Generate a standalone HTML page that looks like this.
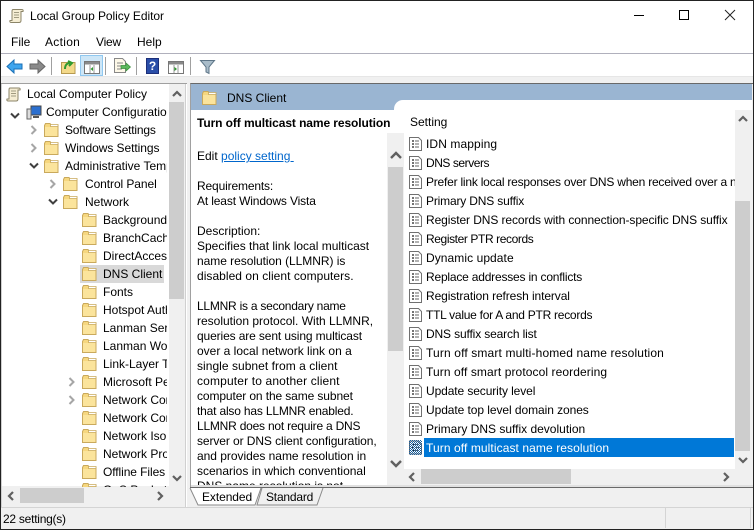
<!DOCTYPE html>
<html><head><meta charset="utf-8"><style>
html,body{margin:0;padding:0;width:754px;height:530px;overflow:hidden;background:#f0f0f0}
*{box-sizing:border-box}
#w{position:absolute;left:0;top:0;width:754px;height:530px;background:#fff;overflow:hidden;font:12px "Liberation Sans",sans-serif;color:#000}
.a{position:absolute}
.t{position:absolute;white-space:nowrap;line-height:16px;height:16px}
.clip{position:absolute;overflow:hidden}
svg{position:absolute;overflow:visible}
</style></head><body><div id="w">
<svg width="0" height="0" style="position:absolute"><defs>
<symbol id="f" viewBox="0 0 15 14"><path d="M.5 2.500v11h13.500v-11.500h-7l-1-1.500h-4.500z" fill="#f6d77f" stroke="#c9a95c"/><path d="M1 4h12.500v9h-12.500z" fill="#fbe49c"/><path d="M6.500 1.500h7.500v2h-7.500z" fill="#fff" stroke="#c9a95c" stroke-width=".8"/></symbol>
<symbol id="d" viewBox="0 0 13 14"><path d="M.5.500h9l3 3v10h-12z" fill="#fff" stroke="#707070"/><path d="M3 4h2M3 7h2M3 10h2" stroke="#222" stroke-width="1.300"/><path d="M6 4h4M6 7h4M6 10h4" stroke="#666" stroke-width="1"/></symbol>
<symbol id="s" viewBox="0 0 15 15"><path d="M4 1h9c1 0 1.500 1 1 2h-2v9c0 1.500-1 2-2 2H2c-1 0-1.500-1-1-2h2V3c0-1 0-2 1-2z" fill="#f5edd3" stroke="#8b8468"/><path d="M5 4h5M5 6.500h5M5 9h5" stroke="#a09a80"/></symbol>
<symbol id="cr" viewBox="0 0 8 10"><path d="M1.500 1l4 4-4 4" fill="none" stroke="#a6a6a6" stroke-width="2"/></symbol>
<symbol id="cd" viewBox="0 0 10 8"><path d="M1 1.500l4 4 4-4" fill="none" stroke="#404040" stroke-width="2"/></symbol>
<symbol id="al" viewBox="0 0 8 10"><path d="M6 1L2 5l4 4" fill="none" stroke="#606060" stroke-width="2.200"/></symbol>
<symbol id="ar" viewBox="0 0 8 10"><path d="M2 1l4 4-4 4" fill="none" stroke="#606060" stroke-width="2.200"/></symbol>
</defs></svg>

<!-- window frame -->
<div class="a" style="left:0;top:0;width:754px;height:1px;background:#222"></div>
<div class="a" style="left:0;top:0;width:1px;height:530px;background:#222"></div>
<div class="a" style="left:753px;top:0;width:1px;height:530px;background:#222"></div>
<div class="a" style="left:0;top:529px;width:754px;height:1px;background:#222"></div>

<!-- title bar -->
<svg style="left:9px;top:8px" width="15" height="16"><use href="#s" width="15" height="16"/></svg>
<div class="t" style="left:30px;top:8px;letter-spacing:-.06px">Local Group Policy Editor</div>
<div class="a" style="left:634px;top:15px;width:10px;height:1px;background:#000"></div>
<div class="a" style="left:679px;top:10px;width:10px;height:10px;border:1px solid #000"></div>
<svg style="left:725px;top:10px" width="10" height="10"><path d="M0 0l10 10M10 0L0 10" stroke="#222" stroke-width="1"/></svg>

<!-- menu -->
<div class="t" style="left:11px;top:34px">File</div>
<div class="t" style="left:45px;top:34px;letter-spacing:.3px">Action</div>
<div class="t" style="left:96px;top:34px;letter-spacing:-.2px">View</div>
<div class="t" style="left:137px;top:34px">Help</div>
<div class="a" style="left:1px;top:53px;width:752px;height:1px;background:#b0b0bc"></div>

<!-- toolbar -->
<svg style="left:6px;top:59px" width="17" height="15"><path d="M8 1L1 7.500 8 14v-4h8V5H8z" fill="#3ea5ee" stroke="#1a6fb5"/></svg>
<svg style="left:29px;top:59px" width="17" height="15"><path d="M9 1l7 6.500L9 14v-4H1V5h8z" fill="#8a8a8a" stroke="#666"/></svg>
<div class="a" style="left:51px;top:57px;width:1px;height:18px;background:#a0a0a0"></div>
<svg style="left:61px;top:59px" width="15" height="15"><path d="M.5 3.500h13.500v11H.5z" fill="#f3d98a" stroke="#b79a50"/><path d="M4 10c0-4 2-6 5-6M7 2l4 2-3 3" fill="none" stroke="#2f9a2f" stroke-width="2"/></svg>
<div class="a" style="left:80px;top:55px;width:23px;height:21px;background:#cde6f7;border:1px solid #90c8f0"></div>
<svg style="left:84px;top:61px" width="16" height="13"><path d="M.5.500h15v12H.5z" fill="#fff" stroke="#777"/><path d="M1 1h14v2.500H1z" fill="#8a8a8a"/><path d="M6 4v8M10 4v8" stroke="#999"/><path d="M9 6v4L6.500 8z" fill="#2f9a2f"/></svg>
<div class="a" style="left:105px;top:57px;width:1px;height:18px;background:#a0a0a0"></div>
<svg style="left:114px;top:58px" width="17" height="16"><path d="M.5.500h8l3 3v11H.5z" fill="#fdf8e8" stroke="#888"/><path d="M3 5h6M3 8h5M3 11h5" stroke="#888"/><path d="M7 7.500h5V5l4.500 4-4.500 4v-2.500H7z" fill="#5cb85c" stroke="#3a8f3a" stroke-width=".7"/></svg>
<div class="a" style="left:136px;top:57px;width:1px;height:18px;background:#a0a0a0"></div>
<div class="a" style="left:146px;top:58px;width:13px;height:16px;background:#2a4ea8;border:1px solid #1c2f7a;color:#fff;font:bold 12px/14px 'Liberation Sans',sans-serif;text-align:center">?</div>
<svg style="left:168px;top:61px" width="16" height="13"><path d="M.5.500h15v12H.5z" fill="#fff" stroke="#777"/><path d="M1 1h14v2.500H1z" fill="#8a8a8a"/><path d="M6 4v8M10 4v8" stroke="#999"/><path d="M6.500 6v4L9 8z" fill="#2f9a2f"/></svg>
<div class="a" style="left:190px;top:57px;width:1px;height:18px;background:#a0a0a0"></div>
<svg style="left:200px;top:60px" width="15" height="14"><path d="M.5.500h14L9 7v6.500L6 12V7z" fill="#a9bcc9" stroke="#5d7587"/></svg>
<div class="a" style="left:1px;top:76px;width:752px;height:1px;background:#e6e6e6"></div>
<div class="a" style="left:1px;top:77px;width:752px;height:6px;background:#f0f0f0"></div>

<!-- tree panel -->
<div class="a" style="left:1px;top:83px;width:185px;height:425px;background:#f0f0f0;border:1px solid #d0d0d0;border-width:0 1px 1px 1px"></div>
<div class="a" style="left:1px;top:83px;width:186px;height:1px;background:#a0a0a0"></div>
<div class="a" style="left:2px;top:84px;width:167px;height:402px;background:#fff"></div>
<div class="clip" style="left:2px;top:84px;width:165px;height:403px">
<svg style="left:4px;top:3px" width="15" height="15"><use href="#s" width="15" height="15"/></svg>
<div class="t" style="left:25px;top:2px">Local Computer Policy</div>
<svg style="left:8px;top:28px" width="10" height="8"><use href="#cd" width="10" height="8"/></svg>
<svg style="left:24px;top:21px" width="16" height="15"><path d="M5 1h10v9H5z" fill="#2b6fcf" stroke="#444"/><path d="M1 4h4v10H1z" fill="#ddd" stroke="#666"/><path d="M7 12h6" stroke="#555" stroke-width="2"/></svg>
<div class="t" style="left:44px;top:20px">Computer Configuration</div>
<!-- rows -->
<svg style="left:28px;top:41px" width="8" height="10"><use href="#cr" width="8" height="10"/></svg>
<svg style="left:42px;top:39px" width="15" height="14"><use href="#f" width="15" height="14"/></svg>
<div class="t" style="left:63px;top:38px;letter-spacing:-.2px">Software Settings</div>
<svg style="left:28px;top:59px" width="8" height="10"><use href="#cr" width="8" height="10"/></svg>
<svg style="left:42px;top:57px" width="15" height="14"><use href="#f" width="15" height="14"/></svg>
<div class="t" style="left:63px;top:56px;letter-spacing:-.06px">Windows Settings</div>
<svg style="left:27px;top:78px" width="10" height="8"><use href="#cd" width="10" height="8"/></svg>
<svg style="left:42px;top:75px" width="15" height="14"><use href="#f" width="15" height="14"/></svg>
<div class="t" style="left:63px;top:74px">Administrative Templates</div>
<svg style="left:47px;top:95px" width="8" height="10"><use href="#cr" width="8" height="10"/></svg>
<svg style="left:61px;top:93px" width="15" height="14"><use href="#f" width="15" height="14"/></svg>
<div class="t" style="left:83px;top:92px;letter-spacing:-.08px">Control Panel</div>
<svg style="left:46px;top:114px" width="10" height="8"><use href="#cd" width="10" height="8"/></svg>
<svg style="left:61px;top:111px" width="15" height="14"><use href="#f" width="15" height="14"/></svg>
<div class="t" style="left:83px;top:110px">Network</div>
<svg style="left:80px;top:129px" width="15" height="14"><use href="#f" width="15" height="14"/></svg>
<div class="t" style="left:101px;top:128px">Background Intelligent</div>
<svg style="left:80px;top:147px" width="15" height="14"><use href="#f" width="15" height="14"/></svg>
<div class="t" style="left:101px;top:146px">BranchCache</div>
<svg style="left:80px;top:165px" width="15" height="14"><use href="#f" width="15" height="14"/></svg>
<div class="t" style="left:101px;top:164px">DirectAccess Client</div>
<div class="a" style="left:78px;top:181px;width:84px;height:18px;background:#d9d9d9"></div>
<svg style="left:80px;top:183px" width="15" height="14"><use href="#f" width="15" height="14"/></svg>
<div class="t" style="left:101px;top:182px">DNS Client</div>
<svg style="left:80px;top:201px" width="15" height="14"><use href="#f" width="15" height="14"/></svg>
<div class="t" style="left:101px;top:200px">Fonts</div>
<svg style="left:80px;top:219px" width="15" height="14"><use href="#f" width="15" height="14"/></svg>
<div class="t" style="left:101px;top:218px">Hotspot Authentication</div>
<svg style="left:80px;top:237px" width="15" height="14"><use href="#f" width="15" height="14"/></svg>
<div class="t" style="left:101px;top:236px">Lanman Server</div>
<svg style="left:80px;top:255px" width="15" height="14"><use href="#f" width="15" height="14"/></svg>
<div class="t" style="left:101px;top:254px">Lanman Workstation</div>
<svg style="left:80px;top:273px" width="15" height="14"><use href="#f" width="15" height="14"/></svg>
<div class="t" style="left:101px;top:272px">Link-Layer Topology</div>
<svg style="left:66px;top:293px" width="8" height="10"><use href="#cr" width="8" height="10"/></svg>
<svg style="left:80px;top:291px" width="15" height="14"><use href="#f" width="15" height="14"/></svg>
<div class="t" style="left:101px;top:290px">Microsoft Peer-to-Peer</div>
<svg style="left:66px;top:311px" width="8" height="10"><use href="#cr" width="8" height="10"/></svg>
<svg style="left:80px;top:309px" width="15" height="14"><use href="#f" width="15" height="14"/></svg>
<div class="t" style="left:101px;top:308px">Network Connections</div>
<svg style="left:80px;top:327px" width="15" height="14"><use href="#f" width="15" height="14"/></svg>
<div class="t" style="left:101px;top:326px">Network Connectivity</div>
<svg style="left:80px;top:345px" width="15" height="14"><use href="#f" width="15" height="14"/></svg>
<div class="t" style="left:101px;top:344px">Network Isolation</div>
<svg style="left:80px;top:363px" width="15" height="14"><use href="#f" width="15" height="14"/></svg>
<div class="t" style="left:101px;top:362px">Network Provider</div>
<svg style="left:80px;top:381px" width="15" height="14"><use href="#f" width="15" height="14"/></svg>
<div class="t" style="left:101px;top:380px;letter-spacing:-.08px">Offline Files</div>
<svg style="left:80px;top:399px" width="15" height="14"><use href="#f" width="15" height="14"/></svg>
<div class="t" style="left:101px;top:398px">QoS Packet Scheduler</div>
</div>
<!-- tree scrollbars -->
<div class="a" style="left:169px;top:84px;width:16px;height:403px;background:#f0f0f0"></div>
<svg style="left:172px;top:90px" width="10" height="8"><path d="M1 6l4-4 4 4" fill="none" stroke="#606060" stroke-width="2.200"/></svg>
<div class="a" style="left:169px;top:102px;width:15px;height:197px;background:#cdcdcd"></div>
<svg style="left:172px;top:474px" width="10" height="8"><path d="M1 2l4 4 4-4" fill="none" stroke="#606060" stroke-width="2.200"/></svg>
<div class="a" style="left:2px;top:487px;width:183px;height:19px;background:#f0f0f0"></div>
<svg style="left:7px;top:491px" width="8" height="10"><use href="#al" width="8" height="10"/></svg>
<div class="a" style="left:20px;top:488px;width:64px;height:15px;background:#cdcdcd"></div>
<svg style="left:156px;top:491px" width="8" height="10"><use href="#ar" width="8" height="10"/></svg>

<!-- right panel -->
<div class="a" style="left:187px;top:83px;width:566px;height:425px;background:#f0f0f0"></div>
<div class="a" style="left:190px;top:83px;width:563px;height:404px;border-left:1px solid #a0a0a0;border-top:1px solid #696969"></div>
<div class="a" style="left:191px;top:84px;width:561px;height:26px;background:#9ab5d2"></div>
<svg style="left:202px;top:91px" width="15" height="14"><use href="#f" width="15" height="14"/></svg>
<div class="t" style="left:227px;top:90px">DNS Client</div>

<!-- description -->
<div class="a" style="left:191px;top:110px;width:213px;height:375px;background:#fff"></div>
<div class="clip" style="left:191px;top:110px;width:203px;height:375px;line-height:15px">
<div class="t" style="left:6px;top:5px;font-weight:bold;letter-spacing:-.09px">Turn off multicast name resolution</div>
<div class="t" style="left:6px;top:38px">Edit <span style="color:#0066cc;text-decoration:underline">policy setting&nbsp;</span></div>
<div class="t" style="left:6px;top:68px;letter-spacing:-.15px">Requirements:</div>
<div class="t" style="left:6px;top:83px;letter-spacing:-.14px">At least Windows Vista</div>
<div class="t" style="left:6px;top:113px">Description:</div>
<div class="t" style="left:6px;top:128px">Specifies that link local multicast</div>
<div class="t" style="left:6px;top:143px;letter-spacing:-.04px">name resolution (LLMNR) is</div>
<div class="t" style="left:6px;top:158px;letter-spacing:.04px">disabled on client computers.</div>
<div class="t" style="left:6px;top:188px;letter-spacing:-.24px">LLMNR is a secondary name</div>
<div class="t" style="left:6px;top:203px">resolution protocol. With LLMNR,</div>
<div class="t" style="left:6px;top:218px;letter-spacing:-.12px">queries are sent using multicast</div>
<div class="t" style="left:6px;top:233px">over a local network link on a</div>
<div class="t" style="left:6px;top:248px;letter-spacing:.04px">single subnet from a client</div>
<div class="t" style="left:6px;top:263px;letter-spacing:.15px">computer to another client</div>
<div class="t" style="left:6px;top:278px;letter-spacing:-.11px">computer on the same subnet</div>
<div class="t" style="left:6px;top:293px;letter-spacing:-.18px">that also has LLMNR enabled.</div>
<div class="t" style="left:6px;top:308px;letter-spacing:-.22px">LLMNR does not require a DNS</div>
<div class="t" style="left:6px;top:323px;letter-spacing:-.09px">server or DNS client configuration,</div>
<div class="t" style="left:6px;top:338px;letter-spacing:-.03px">and provides name resolution in</div>
<div class="t" style="left:6px;top:353px">scenarios in which conventional</div>
<div class="t" style="left:6px;top:368px">DNS name resolution is not</div>
</div>

<!-- settings list -->
<div class="a" style="left:394px;top:100px;width:358px;height:33px;background:#fff;border-radius:9px 0 0 0"></div>
<div class="a" style="left:404px;top:133px;width:348px;height:336px;background:#fff"></div>
<div class="a" style="left:404px;top:469px;width:348px;height:16px;background:#f0f0f0"></div>
<div class="t" style="left:410px;top:114px">Setting</div>
<div class="clip" style="left:404px;top:134px;width:331px;height:335px">
<svg style="left:5px;top:3px" width="13" height="14"><use href="#d" width="13" height="14"/></svg><div class="t" style="left:22px;top:2px;letter-spacing:.1px">IDN mapping</div>
<svg style="left:5px;top:22px" width="13" height="14"><use href="#d" width="13" height="14"/></svg><div class="t" style="left:22px;top:21px;letter-spacing:-.45px">DNS servers</div>
<svg style="left:5px;top:41px" width="13" height="14"><use href="#d" width="13" height="14"/></svg><div class="t" style="left:22px;top:40px;letter-spacing:-.22px">Prefer link local responses over DNS when received over a network</div>
<svg style="left:5px;top:60px" width="13" height="14"><use href="#d" width="13" height="14"/></svg><div class="t" style="left:22px;top:59px;letter-spacing:-.17px">Primary DNS suffix</div>
<svg style="left:5px;top:79px" width="13" height="14"><use href="#d" width="13" height="14"/></svg><div class="t" style="left:22px;top:78px;letter-spacing:-.09px">Register DNS records with connection-specific DNS suffix</div>
<svg style="left:5px;top:98px" width="13" height="14"><use href="#d" width="13" height="14"/></svg><div class="t" style="left:22px;top:97px;letter-spacing:-.4px">Register PTR records</div>
<svg style="left:5px;top:117px" width="13" height="14"><use href="#d" width="13" height="14"/></svg><div class="t" style="left:22px;top:116px;letter-spacing:.07px">Dynamic update</div>
<svg style="left:5px;top:136px" width="13" height="14"><use href="#d" width="13" height="14"/></svg><div class="t" style="left:22px;top:135px;letter-spacing:-.2px">Replace addresses in conflicts</div>
<svg style="left:5px;top:155px" width="13" height="14"><use href="#d" width="13" height="14"/></svg><div class="t" style="left:22px;top:154px;letter-spacing:-.1px">Registration refresh interval</div>
<svg style="left:5px;top:174px" width="13" height="14"><use href="#d" width="13" height="14"/></svg><div class="t" style="left:22px;top:173px;letter-spacing:-.26px">TTL value for A and PTR records</div>
<svg style="left:5px;top:193px" width="13" height="14"><use href="#d" width="13" height="14"/></svg><div class="t" style="left:22px;top:192px;letter-spacing:-.14px">DNS suffix search list</div>
<svg style="left:5px;top:212px" width="13" height="14"><use href="#d" width="13" height="14"/></svg><div class="t" style="left:22px;top:211px;letter-spacing:.14px">Turn off smart multi-homed name resolution</div>
<svg style="left:5px;top:231px" width="13" height="14"><use href="#d" width="13" height="14"/></svg><div class="t" style="left:22px;top:230px;letter-spacing:.09px">Turn off smart protocol reordering</div>
<svg style="left:5px;top:250px" width="13" height="14"><use href="#d" width="13" height="14"/></svg><div class="t" style="left:22px;top:249px;letter-spacing:-.1px">Update security level</div>
<svg style="left:5px;top:269px" width="13" height="14"><use href="#d" width="13" height="14"/></svg><div class="t" style="left:22px;top:268px;letter-spacing:-.07px">Update top level domain zones</div>
<svg style="left:5px;top:288px" width="13" height="14"><use href="#d" width="13" height="14"/></svg><div class="t" style="left:22px;top:287px">Primary DNS suffix devolution</div>
<div class="a" style="left:20px;top:304px;width:310px;height:19px;background:#0078d7"></div>
<svg style="left:5px;top:306px" width="13" height="15"><use href="#d" width="13" height="15"/></svg>
<div class="a" style="left:5px;top:306px;width:13px;height:15px;background:conic-gradient(#175f9f 0 25%,transparent 0 50%,#175f9f 0 75%,transparent 0) 0 0/2px 2px"></div>
<div class="t" style="left:22px;top:306px;color:#fff;letter-spacing:.09px">Turn off multicast name resolution</div>
</div>
<!-- description scrollbar (sits over list's left margin) -->
<div class="a" style="left:387px;top:133px;width:17px;height:352px;background:#f0f0f0"></div>
<svg style="left:390px;top:151px" width="12" height="9"><path d="M1 7l5-5 5 5" fill="none" stroke="#606060" stroke-width="2.400"/></svg>
<div class="a" style="left:388px;top:167px;width:15px;height:184px;background:#cdcdcd"></div>
<svg style="left:390px;top:459px" width="12" height="9"><path d="M1 2l5 5 5-5" fill="none" stroke="#606060" stroke-width="2.400"/></svg>
<!-- list scrollbars -->
<div class="a" style="left:735px;top:110px;width:17px;height:375px;background:#f0f0f0"></div>
<svg style="left:738px;top:115px" width="10" height="8"><path d="M1 6l4-4 4 4" fill="none" stroke="#606060" stroke-width="2.200"/></svg>
<div class="a" style="left:735px;top:201px;width:15px;height:250px;background:#cdcdcd"></div>
<svg style="left:738px;top:456px" width="10" height="8"><path d="M1 2l4 4 4-4" fill="none" stroke="#606060" stroke-width="2.200"/></svg>
<svg style="left:408px;top:472px" width="8" height="10"><use href="#al" width="8" height="10"/></svg>
<div class="a" style="left:421px;top:469px;width:150px;height:15px;background:#cdcdcd"></div>
<svg style="left:722px;top:472px" width="8" height="10"><use href="#ar" width="8" height="10"/></svg>
<div class="a" style="left:191px;top:485px;width:562px;height:2px;background:#e0e0e0"></div>

<!-- tabs -->
<div class="a" style="left:190px;top:487px;width:563px;height:1px;background:#696969"></div>
<svg style="left:188px;top:487px" width="140" height="20">
<path d="M74 1L69 18H129L135 1" fill="#f0f0f0" stroke="#8a8a8a"/>
<path d="M2 1L10 18H67L73 1" fill="#fff" stroke="#8a8a8a"/>
</svg>
<div class="t" style="left:202px;top:489px;letter-spacing:-.08px">Extended</div>
<div class="t" style="left:266px;top:489px;letter-spacing:-.2px">Standard</div>

<!-- status bar -->
<div class="a" style="left:1px;top:507px;width:752px;height:22px;background:#f0f0f0;border-top:1px solid #d4d4d4"></div>
<div class="a" style="left:665px;top:508px;width:1px;height:20px;background:#d4d4d4"></div>
<div class="a" style="left:750px;top:508px;width:1px;height:20px;background:#d4d4d4"></div>
<div class="t" style="left:3px;top:511px;letter-spacing:-.25px">22 setting(s)</div>
</div></body></html>
